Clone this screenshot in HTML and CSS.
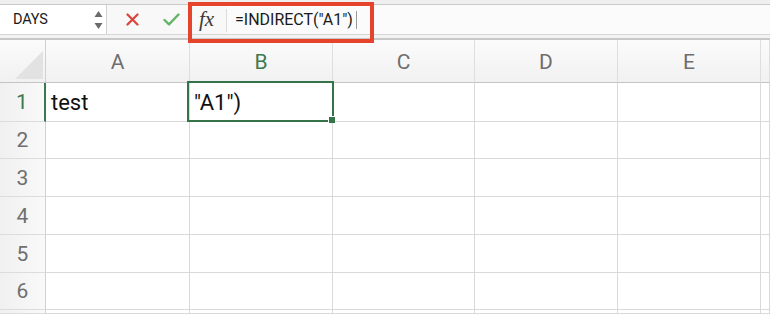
FILE: index.html
```html
<!DOCTYPE html>
<html>
<head>
<meta charset="utf-8">
<link rel="stylesheet" href="styles.css">
</head>
<body>
<div class="app">
  <div class="topstrip"></div>
  <div class="fbar">
    <div class="namebox">
      <span class="name">DAYS</span>
      <span class="spin">
        <svg width="9" height="18" viewBox="0 0 9 18"><polygon points="4.5,0 8.5,6 0.5,6" fill="#6b6b6b"/><polygon points="0.5,12 8.5,12 4.5,18" fill="#6b6b6b"/></svg>
      </span>
    </div>
    <div class="btns">
      <svg class="btn-x" width="13" height="13" viewBox="0 0 13 13"><path d="M1.5 1.5 L11.5 11.5 M11.5 1.5 L1.5 11.5" stroke="#d9483f" stroke-width="2.3" stroke-linecap="round"/></svg>
      <svg class="btn-ok" width="17" height="13" viewBox="0 0 17 13"><path d="M1.5 7 L6 11.3 L15.5 1.5" stroke="#63b466" stroke-width="2.4" fill="none" stroke-linecap="round" stroke-linejoin="round"/></svg>
    </div>
    <div class="fx">fx</div>
    <div class="formula"><span class="ftext">=INDIRECT("A1")</span><span class="caret"></span></div>
  </div>
  <div class="gapline"></div>
  <div class="sheet">
    <div class="corner"><svg width="28" height="28" viewBox="0 0 28 28"><polygon points="28,0 28,28 0,28" fill="#e2e2e2"/></svg></div>
    <div class="colh">A</div>
    <div class="colh sel">B</div>
    <div class="colh">C</div>
    <div class="colh">D</div>
    <div class="colh">E</div>
    <div class="colh"></div>

    <div class="rowh selrow">1</div>
    <div class="cell">test</div>
    <div class="cell active">"A1")<span class="selbox"><span class="handle"></span></span></div>
    <div class="cell"></div><div class="cell"></div><div class="cell"></div><div class="cell"></div>

    <div class="rowh">2</div>
    <div class="cell"></div><div class="cell"></div><div class="cell"></div><div class="cell"></div><div class="cell"></div><div class="cell"></div>

    <div class="rowh">3</div>
    <div class="cell"></div><div class="cell"></div><div class="cell"></div><div class="cell"></div><div class="cell"></div><div class="cell"></div>

    <div class="rowh">4</div>
    <div class="cell"></div><div class="cell"></div><div class="cell"></div><div class="cell"></div><div class="cell"></div><div class="cell"></div>

    <div class="rowh">5</div>
    <div class="cell"></div><div class="cell"></div><div class="cell"></div><div class="cell"></div><div class="cell"></div><div class="cell"></div>

    <div class="rowh">6</div>
    <div class="cell"></div><div class="cell"></div><div class="cell"></div><div class="cell"></div><div class="cell"></div><div class="cell"></div>

    <div class="rowh"></div>
    <div class="cell"></div><div class="cell"></div><div class="cell"></div><div class="cell"></div><div class="cell"></div><div class="cell"></div>
  </div>
  <div class="callout"></div>
</div>
</body>
</html>
```

FILE: styles.css
```css
html, body {
  margin: 0;
  padding: 0;
  background: #ffffff;
  overflow: hidden;
}
.app {
  position: relative;
  width: 770px;
  height: 314px;
  overflow: hidden;
  font-family: Roboto, "Liberation Sans", sans-serif;
}
.topstrip {
  height: 4px;
  background: #efefef;
  border-bottom: 1px solid #c9c9c9;
}
.fbar {
  height: 29px;
  display: flex;
  align-items: stretch;
  background: #f8f8f8;
  border-bottom: 1px solid #d6d6d6;
}
.namebox {
  width: 107px;
  background: #ffffff;
  border-right: 1px solid #d2d2d2;
  display: flex;
  align-items: center;
  justify-content: space-between;
  padding: 0 3px 0 13px;
  box-sizing: border-box;
}
.name {
  font-size: 14.5px;
  color: #1a1a1a;
  letter-spacing: -0.2px;
}
.spin {
  display: flex;
  align-items: center;
}
.btns {
  width: 80px;
  display: flex;
  align-items: center;
  padding-left: 19px;
  gap: 24px;
  box-sizing: border-box;
}
.fx {
  width: 40px;
  box-sizing: border-box;
  padding-left: 12px;
  border-right: 1px solid #dcdcdc;
  margin: 4px 0 2px;
  font-family: "Liberation Serif", "DejaVu Serif", serif;
  font-style: italic;
  font-size: 21px;
  color: #3a3a3a;
  line-height: 20px;
}
.formula {
  flex: 1;
  display: flex;
  align-items: center;
  padding-left: 8px;
  background: #fbfbfb;
}
.ftext {
  font-size: 16px;
  color: #1a1a1a;
  letter-spacing: 0;
}
.caret {
  width: 1px;
  height: 18px;
  background: #9a9a9a;
  margin-left: 3px;
}
.gapline {
  height: 3px;
  background: #f3f3f3;
  border-bottom: 2px solid #c8c8c8;
}
.sheet {
  display: grid;
  grid-template-columns: 46px 144px 143px 142px 143px 143px 1fr;
  grid-template-rows: 43px 39px 37px 38px 38px 38px 37px 1fr;
  height: 274px;
}
.sheet > div {
  box-sizing: border-box;
  border-right: 1px solid #d9d9d9;
  border-bottom: 1px solid #d9d9d9;
}
.corner {
  background: linear-gradient(#fbfbfb, #f1f1f1);
  display: flex;
  align-items: flex-end;
  justify-content: flex-end;
  padding: 0 2px 3px 0;
  border-bottom-color: #c4c4c4 !important;
  border-right-color: #d0d0d0 !important;
}
.colh {
  background: linear-gradient(#fbfbfb, #f1f1f1);
  border-bottom-color: #c4c4c4 !important;
  border-right-color: #dedede !important;
  display: flex;
  align-items: center;
  justify-content: center;
  font-size: 21px;
  color: #6e6e6e;
  padding-top: 1px;
}
.colh.sel {
  color: #3c7a4e;
}
.rowh {
  background: linear-gradient(to right, #f0f0f0, #f9f9f9);
  border-right-color: #d0d0d0 !important;
  border-bottom-color: #dcdcdc !important;
  display: flex;
  align-items: center;
  justify-content: center;
  font-size: 21px;
  color: #6e6e6e;
}
.rowh.selrow {
  color: #3c7a4e;
  border-right: 2px solid #3c7a4e !important;
}
.cell {
  display: flex;
  align-items: center;
  padding-left: 5px;
  font-size: 22px;
  color: #111111;
}
.cell.active {
  position: relative;
  padding-left: 4px;
}
.selbox {
  position: absolute;
  left: -3px;
  top: -2px;
  width: calc(100% + 5px);
  height: calc(100% + 3px);
  box-sizing: border-box;
  border: 2px solid #35744a;
}
.handle {
  position: absolute;
  right: -3px;
  bottom: -3px;
  width: 6px;
  height: 6px;
  background: #35744a;
  border-left: 1px solid #ffffff;
  border-top: 1px solid #ffffff;
}
.callout {
  position: absolute;
  left: 188px;
  top: 2px;
  width: 186px;
  height: 41px;
  box-sizing: border-box;
  border: 4px solid #e5432b;
}
```
